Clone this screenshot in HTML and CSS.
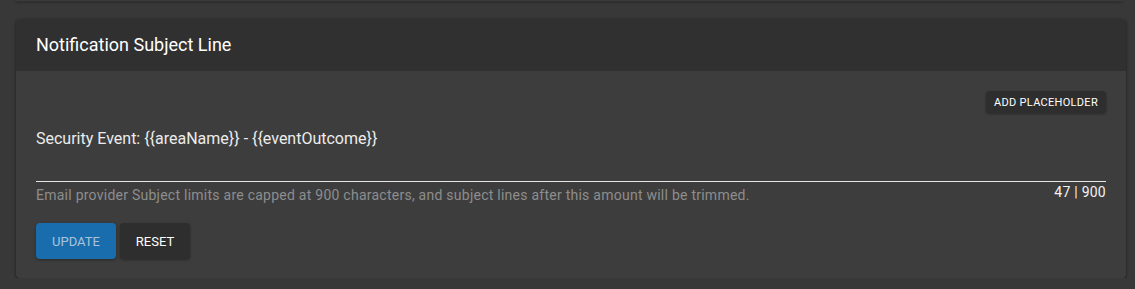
FILE: index.html
```html
<!DOCTYPE html>
<html lang="en">
<head>
    <meta charset="UTF-8">
    <title>Notification Subject Line</title>
    <link rel="stylesheet" href="styles.css">
</head>
<body>
    <div class="card-above"></div>

    <div class="card">
        <div class="card-header">Notification Subject Line</div>
        <div class="card-body">
            <div class="toolbar">
                <button class="btn btn-small">Add Placeholder</button>
            </div>

            <div class="field">
                <div class="field-value">Security Event: {{areaName}} - {{eventOutcome}}</div>
            </div>
            <div class="field-meta">
                <span class="hint">Email provider Subject limits are capped at 900 characters, and subject lines after this amount will be trimmed.</span>
                <span class="counter">47 | 900</span>
            </div>

            <div class="actions">
                <button class="btn btn-primary">Update</button>
                <button class="btn">Reset</button>
            </div>
        </div>
    </div>
</body>
</html>
```

FILE: styles.css
```css
body {
    margin: 0;
    background-color: #383838;
    font-family: Roboto, "Liberation Sans", sans-serif;
    color: #fff;
}
.card-above {
    margin: 0 13px 0 16px;
    height: 1px;
    background-color: #3b3b3b;
    box-shadow: 0 1px 3px rgba(0, 0, 0, 0.6);
}
.card {
    margin: 18px 9px 0 16px;
    background-color: #3d3d3d;
    border-radius: 4px;
    box-shadow: 0 1px 3px rgba(0, 0, 0, 0.55);
    overflow: hidden;
}
.card-header {
    height: 52px;
    line-height: 52px;
    padding: 0 20px;
    background-color: #303030;
    font-size: 18px;
}
.card-body {
    padding: 20px 20px 19px;
}
.toolbar {
    display: flex;
    justify-content: flex-end;
}
.btn {
    font-family: inherit;
    border: none;
    border-radius: 4px;
    background-color: #2e2e2e;
    color: #fff;
    text-transform: uppercase;
    font-size: 13px;
    height: 36px;
    padding: 0 16px;
    box-shadow: 0 1px 3px rgba(0, 0, 0, 0.35);
    cursor: pointer;
}
.btn-small {
    height: 22px;
    font-size: 11px;
    padding: 0 8px;
    letter-spacing: 0.3px;
}
.btn-primary {
    background-color: #1a6dad;
    color: #a9c4db;
}
.field {
    height: 68px;
    border-bottom: 1px solid #e6e6e6;
}
.field-value {
    padding-top: 16px;
    font-size: 16px;
    line-height: 19px;
    color: #ececec;
}
.field-meta {
    display: flex;
    justify-content: space-between;
    font-size: 14px;
    line-height: 16px;
    letter-spacing: 0.25px;
    padding-top: 2px;
}
.hint {
    color: #8d8d8d;
    padding-top: 3px;
}
.counter {
    color: #f2f2f2;
}
.actions {
    display: flex;
    gap: 4px;
    margin-top: 20px;
}
```
